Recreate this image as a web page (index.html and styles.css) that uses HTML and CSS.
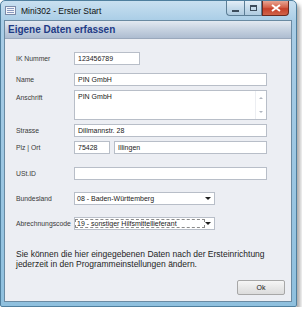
FILE: index.html
```html
<!DOCTYPE html>
<html lang="de">
<head>
    <meta charset="UTF-8">
    <title>Mini302 - Erster Start</title>
    <link rel="stylesheet" href="styles.css">
</head>
<body>
    <div class="window">
        <!-- Titelleiste -->
        <div class="titlebar">
            <svg class="app-icon" width="11" height="9" viewBox="0 0 11 9">
                <rect x="0.5" y="0.5" width="10" height="8" fill="#f4f6fa" stroke="#7a8aa8"/>
                <rect x="2" y="2" width="7" height="1" fill="#8a9ac0"/>
                <rect x="2" y="4" width="7" height="1" fill="#8a9ac0"/>
                <rect x="2" y="6" width="7" height="1" fill="#8a9ac0"/>
            </svg>
            <span class="title">Mini302 - Erster Start</span>
            <div class="controls">
                <div class="ctrl min"><span class="bar"></span></div>
                <div class="ctrl max"><span class="box"></span></div>
                <div class="ctrl close">
                    <svg width="10" height="8" viewBox="0 0 10 8">
                        <path d="M1 1 L9 7 M9 1 L1 7" stroke="#fff" stroke-width="2"/>
                    </svg>
                </div>
            </div>
        </div>

        <div class="client">
            <div class="header">Eigene Daten erfassen</div>

            <div class="form">
                <div class="row row-ik">
                    <label>IK Nummer</label>
                    <div class="field short">123456789</div>
                </div>
                <div class="row row-name">
                    <label>Name</label>
                    <div class="field">PIN GmbH</div>
                </div>
                <div class="row row-addr">
                    <label class="top">Anschrift</label>
                    <div class="field area">
                        <span class="area-text">PIN GmbH</span>
                        <div class="scroll">
                            <span class="arrow up"></span>
                            <span class="arrow down"></span>
                        </div>
                    </div>
                </div>
                <div class="row row-street">
                    <label>Strasse</label>
                    <div class="field">Dillmannstr. 28</div>
                </div>
                <div class="row row-city">
                    <label>Plz | Ort</label>
                    <div class="pair">
                        <div class="field plz">75428</div>
                        <div class="field ort">Illingen</div>
                    </div>
                </div>
                <div class="row row-ust">
                    <label>USt.ID</label>
                    <div class="field"></div>
                </div>
                <div class="row row-land">
                    <label>Bundesland</label>
                    <div class="field combo">
                        <span>08 - Baden-Württemberg</span>
                        <span class="drop"></span>
                    </div>
                </div>
                <div class="row row-code">
                    <label>Abrechnungscode</label>
                    <div class="field combo">
                        <span class="focus">19 - sonstiger Hilfsmittellieferant</span>
                        <span class="drop"></span>
                    </div>
                </div>
            </div>

            <p class="note">Sie können die hier eingegebenen Daten nach der Ersteinrichtung jederzeit in den Programmeinstellungen ändern.</p>

            <div class="footer">
                <button class="ok">Ok</button>
            </div>
        </div>
    </div>
</body>
</html>
```

FILE: styles.css
```css
body, div, p, label, button, span {
    margin: 0;
    padding: 0;
    box-sizing: border-box;
}

body {
    background-color: #ffffff;
    font-family: 'Liberation Sans', Arial, sans-serif;
    font-size: 7px;
    color: #1e1e1e;
}

/* Fensterrahmen */
.window {
    width: 297px;
    height: 307px;
    background: linear-gradient(180deg, #c9e0f0 0px, #a9cde6 20px, #8fc0de 100%);
    border: 1px solid #4f7f9e;
    border-radius: 5px 5px 2px 2px;
    box-shadow: 3px 4px 4px rgba(0, 0, 0, 0.35);
    display: flex;
    flex-direction: column;
}

.titlebar {
    height: 19px;
    display: flex;
    align-items: center;
    padding-left: 4px;
}

.app-icon {
    margin-right: 5px;
}

.title {
    font-family: 'Liberation Sans', Arial, sans-serif;
    font-size: 8.5px;
    color: #101010;
    flex: 1;
}

.controls {
    display: flex;
    align-self: flex-start;
    margin-right: 7px;
}

.ctrl {
    height: 15px;
    display: flex;
    align-items: center;
    justify-content: center;
    border: 1px solid #5c7e96;
    border-top: none;
}

.ctrl.min, .ctrl.max {
    width: 18px;
    background: linear-gradient(180deg, #e3eef7 0%, #c5dbeb 50%, #afcbe0 100%);
}

.ctrl.min {
    border-radius: 0 0 0 4px;
    border-right: none;
}

.ctrl.min .bar {
    width: 7px;
    height: 2px;
    margin-top: 5px;
    background: #3c4c5c;
}

.ctrl.max .box {
    width: 7px;
    height: 6px;
    border: 1px solid #3c4c5c;
    border-top-width: 2px;
}

.ctrl.close {
    width: 27px;
    border-radius: 0 0 4px 0;
    border-color: #6a2a20;
    background: linear-gradient(180deg, #e8a593 0%, #d4624a 45%, #c6402a 55%, #d0644a 100%);
}

/* Inhalt */
.client {
    flex: 1;
    margin: 0 4px 4px 3px;
    background-color: #eceef3;
    border: 1px solid #6a8aa2;
    display: flex;
    flex-direction: column;
}

.header {
    height: 18px;
    padding-left: 3px;
    display: flex;
    align-items: center;
    font-size: 10px;
    font-weight: bold;
    color: #1f3b86;
    background: linear-gradient(180deg, #e3e9f1 0%, #c9d4e2 45%, #aebdd1 100%);
    border-bottom: 1px solid #9aa8bc;
}

.form {
    display: flex;
    flex-direction: column;
    padding: 0 24px 0 11px;
}

.row {
    display: flex;
    align-items: center;
}

.row label {
    width: 58px;
    font-size: 6.8px;
    color: #3a3a3a;
}

.row label.top {
    align-self: flex-start;
    margin-top: 4px;
}

.field {
    flex: 1;
    height: 13px;
    background: #ffffff;
    border: 1px solid #b8bec8;
    padding: 0 3px;
    display: flex;
    align-items: center;
    color: #1a1a1a;
}

.field.short {
    flex: none;
    width: 66px;
}

.row-ik { margin-top: 13px; }
.row-name { margin-top: 8px; }
.row-addr { margin-top: 4px; }
.row-street { margin-top: 4px; }
.row-city { margin-top: 4px; }
.row-ust { margin-top: 13px; }
.row-land { margin-top: 12px; }
.row-code { margin-top: 12px; }

.field.area {
    height: 30px;
    align-items: flex-start;
    padding: 2px 0 0 3px;
}

.area-text {
    flex: 1;
}

.scroll {
    width: 11px;
    height: 28px;
    margin-top: -2px;
    display: flex;
    flex-direction: column;
    justify-content: space-between;
    align-items: center;
    padding: 6px 0 6px;
    border-left: 1px solid #eceef2;
}

.arrow {
    width: 0;
    height: 0;
    border-left: 2px solid transparent;
    border-right: 2px solid transparent;
}

.arrow.up {
    border-bottom: 2px solid #b0b6c0;
}

.arrow.down {
    border-top: 2px solid #b0b6c0;
}

.pair {
    flex: 1;
    display: flex;
    gap: 4px;
}

.field.plz {
    flex: none;
    width: 36px;
}

.field.combo {
    flex: none;
    width: 141px;
    justify-content: space-between;
    padding: 0 3px 0 2px;
}

.focus {
    outline: 1px dashed #8a8a8a;
    padding: 0 1px;
    width: 128px;
    margin-left: -1px;
}

.drop {
    width: 0;
    height: 0;
    border-left: 3px solid transparent;
    border-right: 3px solid transparent;
    border-top: 3px solid #202020;
}

.note {
    margin: 19px 0 0 11px;
    font-size: 8.5px;
    line-height: 10px;
    color: #1e1e1e;
    width: 250px;
}

.footer {
    margin-top: auto;
    display: flex;
    justify-content: flex-end;
    padding: 0 6px 6px 0;
}

.ok {
    width: 48px;
    height: 15px;
    font-family: 'Liberation Sans', Arial, sans-serif;
    font-size: 7px;
    color: #1a1a1a;
    background: linear-gradient(180deg, #f6f6f6 0%, #e8e8e8 50%, #dcdcdc 100%);
    border: 1px solid #a7a7a7;
    border-radius: 2px;
}
```
